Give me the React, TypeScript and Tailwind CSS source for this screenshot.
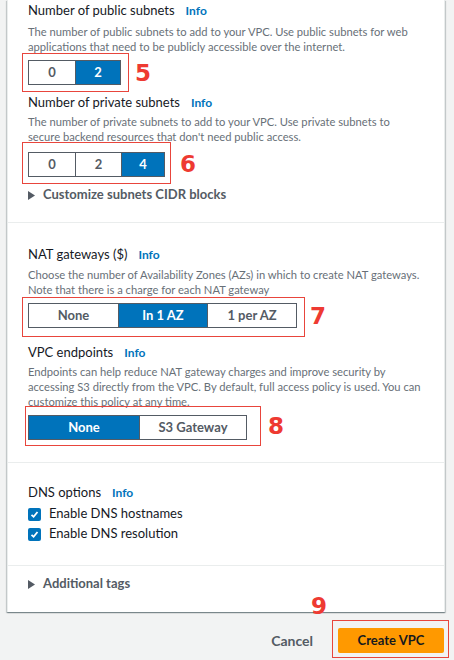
import type { ReactNode } from "react"

function Info() {
  return <span className="ml-[11px] text-[12px] font-bold text-[#0073bb]">Info</span>
}

function Label({ children }: { children: ReactNode }) {
  return (
    <div className="flex items-baseline h-[20px] leading-[20px] text-[13px] text-[#16191f]">
      <span>{children}</span>
      <Info />
    </div>
  )
}

function Desc({ children }: { children: ReactNode }) {
  return <p className="text-[11.2px] leading-[15px] text-[#687078]">{children}</p>
}

function Segmented({ options, selected, widths }: { options: string[]; selected: number; widths: string[] }) {
  return (
    <div className="flex h-[25px] border border-[#545b64]">
      {options.map((o, i) => (
        <div
          key={o}
          className={
            (i > 0 ? "border-l border-[#545b64] " : "") +
            widths[i] +
            " flex items-center justify-center text-[13px] font-bold " +
            (i === selected ? "bg-[#0073bb] text-white" : "bg-white text-[#545b64]")
          }
        >
          {o}
        </div>
      ))}
    </div>
  )
}

function Mark({ n, box, num }: { n: string; box: string; num: string }) {
  return (
    <>
      <div className={"absolute border border-[#e8453c] pointer-events-none " + box} />
      <span
        className={"absolute text-[23px] leading-none font-bold text-[#ee3a32] " + num}
        style={{ fontFamily: "'DejaVu Sans', sans-serif" }}
      >
        {n}
      </span>
    </>
  )
}

function Expander({ children }: { children: ReactNode }) {
  return (
    <div className="flex items-center h-[20px] text-[13px] font-bold text-[#545b64]">
      <svg width="7" height="9" viewBox="0 0 7 9" className="mr-[8px]">
        <path d="M0 0 L7 4.5 L0 9 Z" fill="#545b64" />
      </svg>
      {children}
    </div>
  )
}

function Check({ children }: { children: ReactNode }) {
  return (
    <label className="flex items-center h-[20px] text-[13px] text-[#16191f]">
      <span className="w-[13px] h-[13px] rounded-[2px] bg-[#0073bb] flex items-center justify-center mr-[8px]">
        <svg width="9" height="9" viewBox="0 0 9 9">
          <path d="M1.5 4.8 L3.6 6.8 L7.5 2" stroke="white" strokeWidth="1.8" fill="none" />
        </svg>
      </span>
      {children}
    </label>
  )
}

export default function App() {
  return (
    <div
      className="w-[454px] h-[660px] bg-[#f2f3f3] pl-[7px] pr-[9px] overflow-hidden"
      style={{ fontFamily: "Lato, 'Liberation Sans', sans-serif" }}
    >
      <div className="bg-white border-x border-[#eaeded] shadow-[0_1px_1px_0_rgba(0,28,36,0.3),1px_1px_1px_0_rgba(0,28,36,0.15),-1px_1px_1px_0_rgba(0,28,36,0.15)]">
        <div className="px-[20px] pb-[17px]">
          <Label>Number of public subnets</Label>
          <div className="mt-[4px]">
            <Desc>
              The number of public subnets to add to your VPC. Use public subnets for web applications that need to be
              publicly accessible over the internet.
            </Desc>
          </div>
          <div className="relative w-fit mt-[6px]">
            <Segmented options={["0", "2"]} selected={1} widths={["w-[46px]", "w-[45px]"]} />
            <Mark n="5" box="-left-[6px] -top-[7px] -right-[8px] -bottom-[7px]" num="left-[107px] top-[2px]" />
          </div>
          <div className="mt-[7px]">
            <Label>Number of private subnets</Label>
          </div>
          <div className="mt-[2px]">
            <Desc>
              The number of private subnets to add to your VPC. Use private subnets to secure backend resources that
              don't need public access.
            </Desc>
          </div>
          <div className="relative w-fit mt-[8px]">
            <Segmented options={["0", "2", "4"]} selected={2} widths={["w-[46px]", "w-[46px]", "w-[43px]"]} />
            <Mark n="6" box="-left-[6px] -top-[10px] -right-[6px] -bottom-[7px]" num="left-[152px] top-[1px]" />
          </div>
          <div className="mt-[8px]">
            <Expander>Customize subnets CIDR blocks</Expander>
          </div>
        </div>

        <div className="border-t border-[#eaeded] px-[20px] pt-[21px] pb-[22px]">
          <Label>NAT gateways ($)</Label>
          <div className="mt-[3px]">
            <Desc>
              Choose the number of Availability Zones (AZs) in which to create NAT gateways. Note that there is a charge
              for each NAT gateway
            </Desc>
          </div>
          <div className="relative w-fit mt-[6px]">
            <Segmented
              options={["None", "In 1 AZ", "1 per AZ"]}
              selected={1}
              widths={["w-[89px]", "w-[89px]", "w-[89px]"]}
            />
            <Mark n="7" box="-left-[6px] -top-[6px] -right-[8px] -bottom-[9px]" num="left-[282px] top-[2px]" />
          </div>
          <div className="mt-[14px]">
            <Label>VPC endpoints</Label>
          </div>
          <div className="mt-[2px]">
            <Desc>
              Endpoints can help reduce NAT gateway charges and improve security by accessing S3 directly from the VPC. By
              default, full access policy is used. You can customize this policy at any time.
            </Desc>
          </div>
          <div className="relative w-fit mt-[6px]">
            <Segmented options={["None", "S3 Gateway"]} selected={0} widths={["w-[110px]", "w-[107px]"]} />
            <Mark n="8" box="-left-[3px] -top-[9px] -right-[14px] -bottom-[6px]" num="left-[240px] top-[0px]" />
          </div>
        </div>

        <div className="border-t border-[#eaeded] px-[20px] pt-[19px] pb-[21px]">
          <Label>DNS options</Label>
          <div className="mt-[2px]">
            <Check>Enable DNS hostnames</Check>
            <Check>Enable DNS resolution</Check>
          </div>
        </div>

        <div className="border-t border-[#eaeded] px-[20px] pt-[8px] pb-[18px]">
          <Expander>Additional tags</Expander>
        </div>
      </div>

      <div className="flex items-center justify-end pt-[15px] pr-[1px]">
        <span className="text-[14px] font-bold text-[#545b64] mr-[25px]">Cancel</span>
        <div className="relative">
          <button className="h-[25px] w-[106px] rounded-[2px] bg-[#ff9900] text-[13px] font-bold text-[#16191f]">
            Create VPC
          </button>
          <Mark n="9" box="-left-[6px] -top-[7px] -right-[5px] -bottom-[5px]" num="-left-[27px] -top-[32px]" />
        </div>
      </div>
    </div>
  )
}
